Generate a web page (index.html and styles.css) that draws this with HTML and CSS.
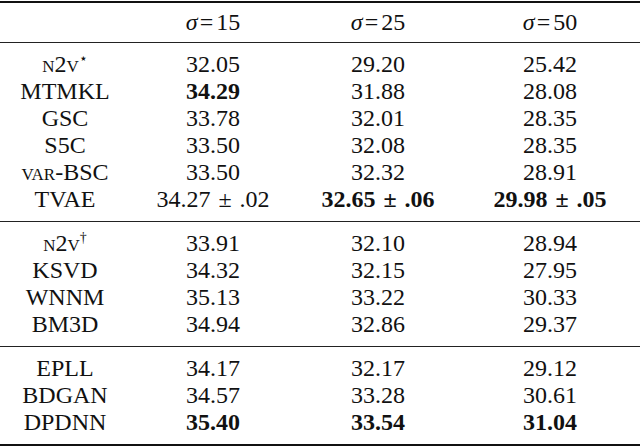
FILE: index.html
```html
<!DOCTYPE html>
<html lang="en">
<head>
    <meta charset="UTF-8">
    <meta name="viewport" content="width=device-width, initial-scale=1.0">
    <title>Denoising results</title>
    <link rel="stylesheet" href="styles.css">
</head>
<body>
    <div class="table">
        <div class="row head">
            <div class="c1"></div>
            <div class="c2"><i class="sigma">σ</i><span class="eq">=</span>15</div>
            <div class="c3"><i class="sigma">σ</i><span class="eq">=</span>25</div>
            <div class="c4"><i class="sigma">σ</i><span class="eq">=</span>50</div>
        </div>

        <!-- first block -->
        <div class="group">
            <div class="row">
                <div class="c1"><span class="sc">n2v</span><sup>⋆</sup></div>
                <div class="c2">32.05</div>
                <div class="c3">29.20</div>
                <div class="c4">25.42</div>
            </div>
            <div class="row">
                <div class="c1">MTMKL</div>
                <div class="c2 best">34.29</div>
                <div class="c3">31.88</div>
                <div class="c4">28.08</div>
            </div>
            <div class="row">
                <div class="c1">GSC</div>
                <div class="c2">33.78</div>
                <div class="c3">32.01</div>
                <div class="c4">28.35</div>
            </div>
            <div class="row">
                <div class="c1">S5C</div>
                <div class="c2">33.50</div>
                <div class="c3">32.08</div>
                <div class="c4">28.35</div>
            </div>
            <div class="row">
                <div class="c1"><span class="sc">var</span>-BSC</div>
                <div class="c2">33.50</div>
                <div class="c3">32.32</div>
                <div class="c4">28.91</div>
            </div>
            <div class="row">
                <div class="c1">TVAE</div>
                <div class="c2">34.27 <span class="pm">±</span> .02</div>
                <div class="c3 best">32.65 <span class="pm">±</span> .06</div>
                <div class="c4 best">29.98 <span class="pm">±</span> .05</div>
            </div>
        </div>

        <!-- second block -->
        <div class="group">
            <div class="row">
                <div class="c1"><span class="sc">n2v</span><sup>†</sup></div>
                <div class="c2">33.91</div>
                <div class="c3">32.10</div>
                <div class="c4">28.94</div>
            </div>
            <div class="row">
                <div class="c1">KSVD</div>
                <div class="c2">34.32</div>
                <div class="c3">32.15</div>
                <div class="c4">27.95</div>
            </div>
            <div class="row">
                <div class="c1">WNNM</div>
                <div class="c2">35.13</div>
                <div class="c3">33.22</div>
                <div class="c4">30.33</div>
            </div>
            <div class="row">
                <div class="c1">BM3D</div>
                <div class="c2">34.94</div>
                <div class="c3">32.86</div>
                <div class="c4">29.37</div>
            </div>
        </div>

        <!-- third block -->
        <div class="group">
            <div class="row">
                <div class="c1">EPLL</div>
                <div class="c2">34.17</div>
                <div class="c3">32.17</div>
                <div class="c4">29.12</div>
            </div>
            <div class="row">
                <div class="c1">BDGAN</div>
                <div class="c2">34.57</div>
                <div class="c3">33.28</div>
                <div class="c4">30.61</div>
            </div>
            <div class="row">
                <div class="c1">DPDNN</div>
                <div class="c2 best">35.40</div>
                <div class="c3 best">33.54</div>
                <div class="c4 best">31.04</div>
            </div>
        </div>
    </div>
</body>
</html>
```

FILE: styles.css
```css
body {
    margin: 0;
    color: #111;
    font-family: "Liberation Serif", serif;
    font-size: 24px;
}
.table {
    margin-top: 1px;
    border-top: 2px solid #111;
    border-bottom: 2px solid #111;
}
.row {
    display: flex;
    align-items: center;
    height: 27px;
    text-align: center;
    white-space: nowrap;
}
.c1 { width: 130px; }
.c2 { width: 166px; }
.c3 { width: 164px; }
.c4 { width: 180px; }
.head {
    height: 39px;
    border-bottom: 1px solid #222;
}
.sigma {
    margin-right: 2px;
}
.eq {
    margin-right: 3px;
}
.group {
    padding: 8px 0;
}
.group + .group {
    border-top: 1px solid #222;
}
.sc {
    font-variant: small-caps;
}
sup {
    font-size: 14px;
    line-height: 0;
    vertical-align: 9px;
}
.best {
    font-weight: bold;
}
.pm {
    margin: 0 2px;
}
```
